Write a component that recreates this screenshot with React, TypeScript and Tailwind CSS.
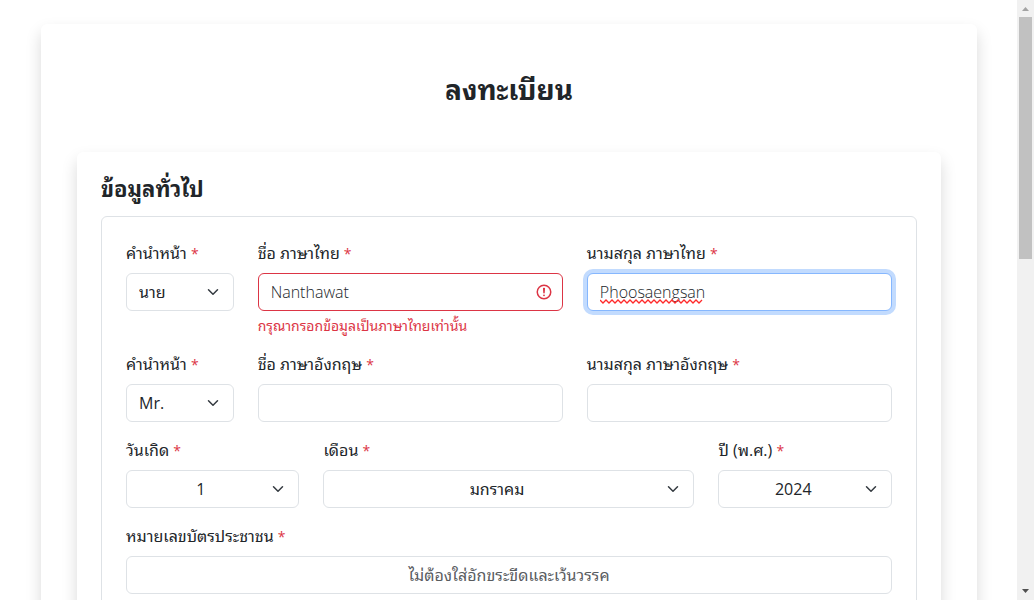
import React, { useId } from "react";

const controlBase =
  "block h-[38px] w-full rounded-md border bg-white px-3 py-1.5 text-base leading-6 text-[#212529] outline-none";

function Label({ htmlFor, text }: { htmlFor: string; text: string }) {
  return (
    <label htmlFor={htmlFor} className="mb-2 block whitespace-nowrap">
      {text} <span className="text-sm leading-none text-[#dc3545]">*</span>
    </label>
  );
}

function SelectField({
  label,
  options,
  span,
  centered = false,
}: {
  label: string;
  options: string[];
  span: string;
  centered?: boolean;
}) {
  const id = useId();
  return (
    <div className={span}>
      <Label htmlFor={id} text={label} />
      <div className="relative">
        <select
          id={id}
          className={`${controlBase} appearance-none border-[#dee2e6] pr-9 ${centered ? "[text-align-last:center]" : ""}`}
        >
          {options.map((o) => (
            <option key={o}>{o}</option>
          ))}
        </select>
        <svg
          viewBox="0 0 16 16"
          aria-hidden="true"
          className="pointer-events-none absolute inset-y-0 right-[13px] my-auto h-3 w-4"
          fill="none"
          stroke="#343a40"
          strokeWidth="2"
          strokeLinecap="round"
          strokeLinejoin="round"
        >
          <path d="m2 5 6 6 6-6" />
        </svg>
      </div>
    </div>
  );
}

type InputState = "normal" | "invalid" | "active";

const stateClass: Record<InputState, string> = {
  normal: "border-[#dee2e6]",
  invalid: "border-[#dc3545] pr-9",
  active: "border-[#86b7fe] ring-4 ring-[#c2dbfe]",
};

function Squiggle() {
  let d = "M0 1";
  for (let x = 3; x <= 102; x += 3) d += ` L${x} ${x % 2 === 1 ? 4 : 1}`;
  return (
    <svg
      aria-hidden="true"
      viewBox="0 0 103 5"
      className="pointer-events-none absolute bottom-[7px] left-[13px] h-[5px] w-[103px]"
      fill="none"
      stroke="#ff2a2a"
      strokeWidth="1.3"
    >
      <path d={d} />
    </svg>
  );
}

function TextField({
  label,
  span,
  value = "",
  placeholder,
  state = "normal",
  error,
  centered = false,
}: {
  label: string;
  span: string;
  value?: string;
  placeholder?: string;
  state?: InputState;
  error?: string;
  centered?: boolean;
}) {
  const id = useId();
  const errorId = `${id}-error`;
  return (
    <div className={span}>
      <Label htmlFor={id} text={label} />
      <div className="relative">
        <input
          id={id}
          type="text"
          defaultValue={value}
          placeholder={placeholder}
          aria-invalid={state === "invalid"}
          aria-describedby={error ? errorId : undefined}
          className={`${controlBase} font-light placeholder:font-normal placeholder:text-[#595c5f] ${stateClass[state]} ${centered ? "text-center" : ""}`}
        />
        {state === "invalid" && (
          <svg
            viewBox="0 0 12 12"
            aria-hidden="true"
            className="pointer-events-none absolute inset-y-0 right-2.5 my-auto size-[18px]"
            fill="none"
            stroke="#dc3545"
          >
            <circle cx="6" cy="6" r="4.5" />
            <path strokeLinejoin="round" d="M5.8 3.6h.4L6 6.5z" />
            <circle cx="6" cy="8.2" r=".6" fill="#dc3545" stroke="none" />
          </svg>
        )}
        {state === "active" && <Squiggle />}
      </div>
      {error && (
        <p id={errorId} className="mt-1 text-sm leading-[21px] text-[#dc3545]">
          {error}
        </p>
      )}
    </div>
  );
}

function ScrollBar() {
  return (
    <div aria-hidden="true" className="flex w-[17px] shrink-0 flex-col items-center bg-[#f1f1f1]">
      <svg viewBox="0 0 17 17" className="size-[17px] shrink-0" fill="#a3a3a3">
        <path d="M5 11h7L8.500 7z" />
      </svg>
      <div className="h-[242px] w-[13px] bg-[#c1c1c1]" />
      <svg viewBox="0 0 17 17" className="mt-auto size-[17px] shrink-0" fill="#505050">
        <path d="M5 6h7L8.500 10z" />
      </svg>
    </div>
  );
}

const months = [
  "มกราคม", "กุมภาพันธ์", "มีนาคม", "เมษายน", "พฤษภาคม", "มิถุนายน",
  "กรกฎาคม", "สิงหาคม", "กันยายน", "ตุลาคม", "พฤศจิกายน", "ธันวาคม",
];
const days = Array.from({ length: 31 }, (_, i) => String(i + 1));
const years = Array.from({ length: 80 }, (_, i) => String(2024 - i));

export default function App() {
  return (
    <div className="flex h-screen bg-white font-['Open_Sans','Noto_Sans_Thai_Looped','Leelawadee_UI','Loma','Waree','Garuda','Tlwg_Typo','Noto_Serif_Thai',sans-serif] text-base leading-6 text-[#212529]">
      <main className="min-w-0 flex-1 overflow-hidden pt-6 pr-10 pl-[41px]">
        <div className="rounded-md bg-white px-9 pt-12 pb-12 shadow-[0_8px_16px_rgba(0,0,0,0.15)]">
          <h1 className="mb-[46px] text-center text-[28px] leading-[34px] font-bold">ลงทะเบียน</h1>
          <form className="rounded-md bg-white p-6 shadow-[0_8px_16px_rgba(0,0,0,0.15)]">
            <h2 className="mb-4 text-[22px] leading-6 font-bold">ข้อมูลทั่วไป</h2>
            <div className="grid grid-cols-12 gap-x-6 gap-y-4 rounded-md border border-[#dee2e6] p-6">
              <SelectField label="คำนำหน้า" options={["นาย", "นาง", "นางสาว"]} span="col-span-2" />
              <TextField
                label="ชื่อ ภาษาไทย"
                span="col-span-5"
                value="Nanthawat"
                state="invalid"
                error="กรุณากรอกข้อมูลเป็นภาษาไทยเท่านั้น"
              />
              <TextField label="นามสกุล ภาษาไทย" span="col-span-5" value="Phoosaengsan" state="active" />

              <SelectField label="คำนำหน้า" options={["Mr.", "Mrs.", "Miss"]} span="col-span-2" />
              <TextField label="ชื่อ ภาษาอังกฤษ" span="col-span-5" />
              <TextField label="นามสกุล ภาษาอังกฤษ" span="col-span-5" />

              <SelectField label="วันเกิด" options={days} span="col-span-3" centered />
              <SelectField label="เดือน" options={months} span="col-span-6" centered />
              <SelectField label="ปี (พ.ศ.)" options={years} span="col-span-3" centered />

              <TextField
                label="หมายเลขบัตรประชาชน"
                span="col-span-12"
                placeholder="ไม่ต้องใส่อักขระขีดและเว้นวรรค"
                centered
              />
            </div>
          </form>
        </div>
      </main>
      <ScrollBar />
    </div>
  );
}
